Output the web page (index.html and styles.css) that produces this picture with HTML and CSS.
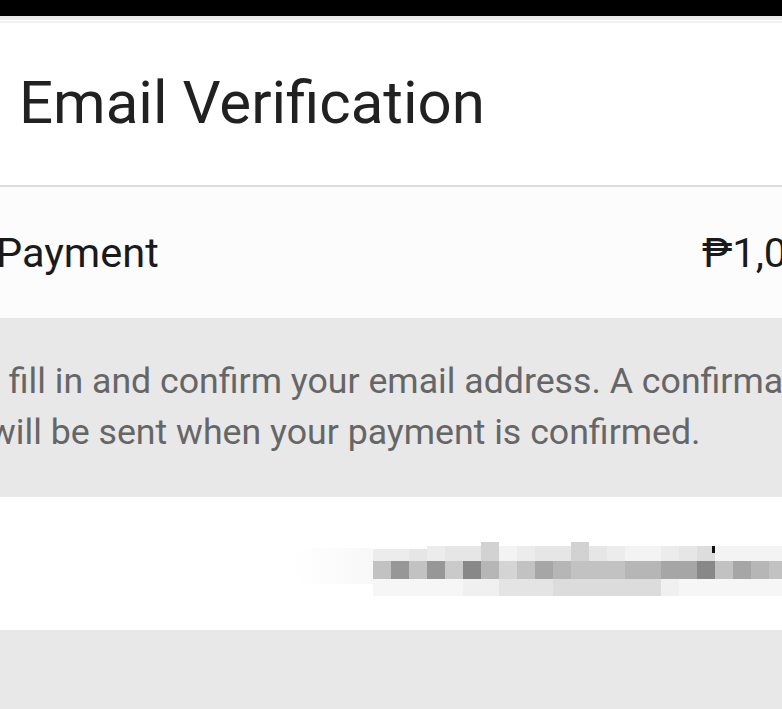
FILE: index.html
```html
<!DOCTYPE html>
<html lang="en">
<head>
<meta charset="utf-8">
<title>Email Verification</title>
<link rel="stylesheet" href="styles.css">
</head>
<body>
<div class="statusbar"></div>
<header class="header">
  <div class="hairline"></div>
  <div class="hairline second"></div>
  <h1 class="title">Email Verification</h1>
</header>
<section class="payment-row">
  <span class="pay-label">Payment</span>
  <span class="pay-amount">₱1,000.00</span>
</section>
<section class="notice">
  <span class="notice-line first">Please, fill in and confirm your email address. A confirmation email</span>
  <span class="notice-line second">will be sent when your payment is confirmed.</span>
</section>
<section class="email-row">
  <div class="haze"></div>
  <div class="mosaic" aria-label="hidden email address">
    <div class="band top">
      <i class="s1 short"></i><i class="s1 short"></i><i class="s2 short"></i><i class="s1"></i><i class="s2"></i><i class="s2"></i><i class="s5 tall"></i><i class="s0"></i><i class="s1"></i><i class="s2"></i><i class="s2"></i><i class="s5 tall"></i><i class="s2"></i><i class="s1"></i><i class="s0"></i><i class="s0"></i><i class="s1"></i><i class="s2"></i><i class="s3"></i><i class="s0"></i><i class="s0"></i><i class="s0"></i><i class="s0"></i>
    </div>
    <div class="band mid">
      <i class="m4"></i><i class="m1"></i><i class="m4"></i><i class="m1"></i><i class="m5"></i><i class="m0"></i><i class="m3"></i><i class="m6"></i><i class="m4"></i><i class="m2"></i><i class="m3"></i><i class="m4"></i><i class="m4"></i><i class="m4"></i><i class="m3"></i><i class="m3"></i><i class="m2"></i><i class="m2"></i><i class="m0"></i><i class="m4"></i><i class="m2"></i><i class="m3"></i><i class="m4"></i>
    </div>
    <div class="band bot">
      <i class="b0"></i><i class="b0"></i><i class="b0"></i><i class="b0"></i><i class="b0"></i><i class="b1"></i><i class="b1"></i><i class="b2"></i><i class="b2"></i><i class="b2"></i><i class="b3"></i><i class="b3"></i><i class="b3"></i><i class="b3"></i><i class="b3"></i><i class="b3"></i><i class="b1"></i><i class="b0"></i><i class="b0"></i><i class="b0"></i><i class="b0"></i><i class="b0"></i><i class="b0"></i>
    </div>
    <span class="caret"></span>
  </div>
</section>
<div class="footer-space"></div>
</body>
</html>
```

FILE: styles.css
```css
html, body {
  margin: 0;
  padding: 0;
  overflow: hidden;
}

body {
  width: 782px;
  height: 709px;
  background: #e8e8e8;
  font-family: Roboto, "Noto Sans", "DejaVu Sans", sans-serif;
}

.statusbar {
  height: 16px;
  background: #000;
}

.header {
  background: #fff;
  border-bottom: 2px solid #dcdcdc;
  padding: 0 0 53px 19px;
}

.hairline {
  height: 2px;
  margin-top: 2px;
  background: #ececec;
  margin-left: -19px;
}

.hairline.second {
  margin-top: 1px;
  background: #f2f2f2;
}

.title {
  margin: 0;
  padding-top: 51px;
  font-size: 60px;
  line-height: 58px;
  font-weight: 400;
  color: #212121;
  white-space: nowrap;
}

.payment-row {
  display: flex;
  align-items: center;
  height: 131px;
  background: #fcfcfc;
  margin-left: -4px;
  white-space: nowrap;
  font-size: 41.5px;
  line-height: 42px;
  color: #1a1a1a;
}

.pay-label {
  flex: 0 0 706px;
}

.pay-amount {
  flex: 0 0 auto;
}

.notice {
  display: flex;
  flex-direction: column;
  height: 179px;
  box-sizing: border-box;
  padding-top: 38px;
  font-size: 35.7px;
  line-height: 51px;
  color: #666666;
  white-space: nowrap;
}

.notice-line.first {
  margin-left: -114px;
}

.notice-line.second {
  margin-left: -11px;
}

.email-row {
  position: relative;
  display: flex;
  height: 133px;
  box-sizing: border-box;
  padding-top: 45px;
  background: #fff;
}

.haze {
  flex: 0 0 83px;
  height: 36px;
  margin: 6px 0 0 290px;
  background: linear-gradient(to right, rgba(248,248,248,0), #f8f8f8);
  border-radius: 18px 0 0 18px;
}

.mosaic {
  position: relative;
  display: flex;
  flex-direction: column;
}

.band {
  display: flex;
  align-items: flex-end;
}

.band i {
  display: block;
  flex: 0 0 18px;
}

.band.top i { height: 15px; }
.band.top i.short { height: 12px; }
.band.top i.tall { height: 19px; }
.band.mid i { height: 18px; }
.band.bot { align-items: flex-start; }
.band.bot i { height: 17px; }

.s0 { background: #f3f3f3; }
.s1 { background: #ececec; }
.s2 { background: #e6e6e6; }
.s3 { background: #dddddd; }
.s5 { background: #d2d2d2; }

.m0 { background: #888888; }
.m1 { background: #979797; }
.m2 { background: #a6a6a6; }
.m3 { background: #b6b6b6; }
.m4 { background: #c2c2c2; }
.m5 { background: #cacaca; }
.m6 { background: #d4d4d4; }

.b0 { background: #f6f6f6; }
.b1 { background: #f0f0f0; }
.b2 { background: #e4e4e4; }
.b3 { background: #dcdcdc; }

.caret {
  position: absolute;
  left: 339px;
  top: 4px;
  width: 3px;
  height: 7px;
  background: #111;
}

.footer-space {
  height: 80px;
  background: #e8e8e8;
}
```
